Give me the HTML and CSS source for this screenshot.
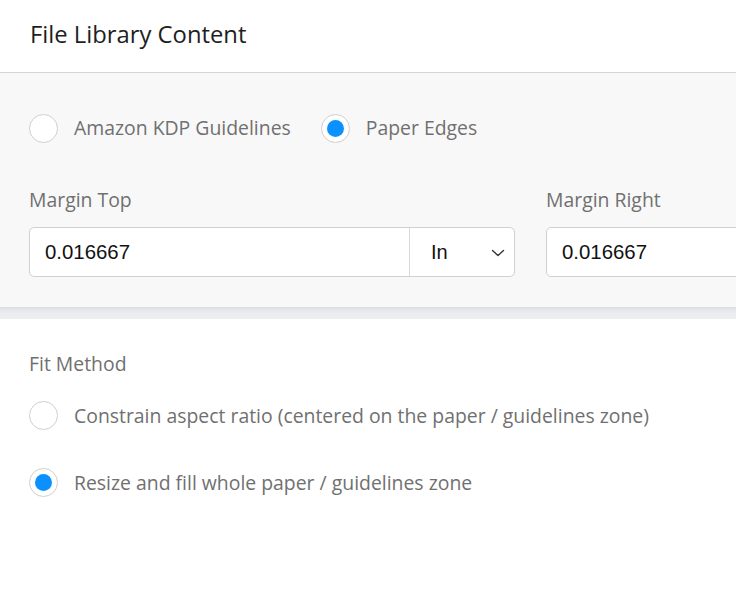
FILE: index.html
```html
<!DOCTYPE html>
<html>
<head>
<meta charset="utf-8">
<link rel="stylesheet" href="styles.css">
</head>
<body>
<div class="page">
  <header class="header">
    <h1 class="title">File Library Content</h1>
  </header>
  <section class="panel">
    <div class="radio-row">
      <label class="radio"><span class="circle"></span><span class="radio-text">Amazon KDP Guidelines</span></label>
      <label class="radio"><span class="circle checked"></span><span class="radio-text">Paper Edges</span></label>
    </div>
    <div class="fields">
      <div class="field">
        <div class="field-label">Margin Top</div>
        <div class="input-group">
          <div class="input-value">0.016667</div>
          <div class="unit">
            <span>In</span>
            <svg class="chev" width="14" height="8" viewBox="0 0 14 8"><path d="M1.5 1.5 L7 6.5 L12.5 1.5" fill="none" stroke="#333" stroke-width="1.4" stroke-linecap="round" stroke-linejoin="round"/></svg>
          </div>
        </div>
      </div>
      <div class="field">
        <div class="field-label">Margin Right</div>
        <div class="input-group">
          <div class="input-value">0.016667</div>
          <div class="unit">
            <span>In</span>
            <svg class="chev" width="14" height="8" viewBox="0 0 14 8"><path d="M1.5 1.5 L7 6.5 L12.5 1.5" fill="none" stroke="#333" stroke-width="1.4" stroke-linecap="round" stroke-linejoin="round"/></svg>
          </div>
        </div>
      </div>
    </div>
  </section>
  <div class="strip"></div>
  <section class="fit">
    <div class="field-label">Fit Method</div>
    <label class="radio fit-first"><span class="circle"></span><span class="radio-text">Constrain aspect ratio (centered on the paper / guidelines zone)</span></label>
    <label class="radio fit-second"><span class="circle checked"></span><span class="radio-text">Resize and fill whole paper / guidelines zone</span></label>
  </section>
</div>
</body>
</html>
```

FILE: styles.css
```css
* { box-sizing: border-box; }
html, body { margin: 0; padding: 0; background: #fff; }
body {
  font-family: "Open Sans", "Liberation Sans", sans-serif;
  width: 736px;
  height: 606px;
  overflow: hidden;
}
.page { width: 736px; }
.header {
  height: 73px;
  border-bottom: 1px solid #d4d4d4;
  padding: 0 30px;
  display: flex;
  align-items: center;
}
.title {
  margin: 0;
  font-weight: 400;
  font-size: 23.8px;
  color: #1e1e1e;
  line-height: 30px;
  position: relative;
  top: -2px;
}
.panel {
  background: #f8f8f8;
  padding: 41px 29px 30px;
  height: 234px;
  overflow: hidden;
}
.radio-row {
  display: flex;
  gap: 30px;
  height: 28px;
  align-items: center;
}
.radio {
  display: flex;
  align-items: center;
  gap: 16px;
  font-size: 19.4px;
  color: #707070;
}
.circle {
  width: 29px;
  height: 29px;
  border-radius: 50%;
  border: 1px solid #cfcfcf;
  background: #fff;
  flex: none;
  display: flex;
  align-items: center;
  justify-content: center;
}
.circle.checked::after {
  content: "";
  width: 17px;
  height: 17px;
  border-radius: 50%;
  background: #0a91ff;
}
.radio-text { line-height: 26px; }
.fields {
  display: flex;
  gap: 31px;
  margin-top: 46px;
}
.field { width: 486px; flex: none; }
.field-label {
  font-size: 19.4px;
  color: #707070;
  line-height: 24px;
}
.input-group {
  margin-top: 15px;
  height: 50px;
  display: flex;
  border: 1px solid #d0d0d0;
  border-radius: 5px;
  background: #fff;
  overflow: hidden;
}
.input-value {
  flex: 1;
  padding-left: 15px;
  display: flex;
  align-items: center;
  font-family: "Liberation Sans", Arial, sans-serif;
  font-size: 20.4px;
  color: #111;
}
.unit {
  width: 105px;
  border-left: 1px solid #d8d8d8;
  display: flex;
  align-items: center;
  justify-content: space-between;
  padding: 0 9px 0 21px;
  font-family: "Liberation Sans", Arial, sans-serif;
  font-size: 20px;
  color: #111;
}
.chev { margin-top: 1px; }
.strip {
  height: 12px;
  background: linear-gradient(#dcdee1, #e9ebee 40%, #eceef0);
}
.fit {
  padding: 33px 29px 0;
}
.fit-first { margin-top: 25px; }
.fit-second { margin-top: 38px; }
```
